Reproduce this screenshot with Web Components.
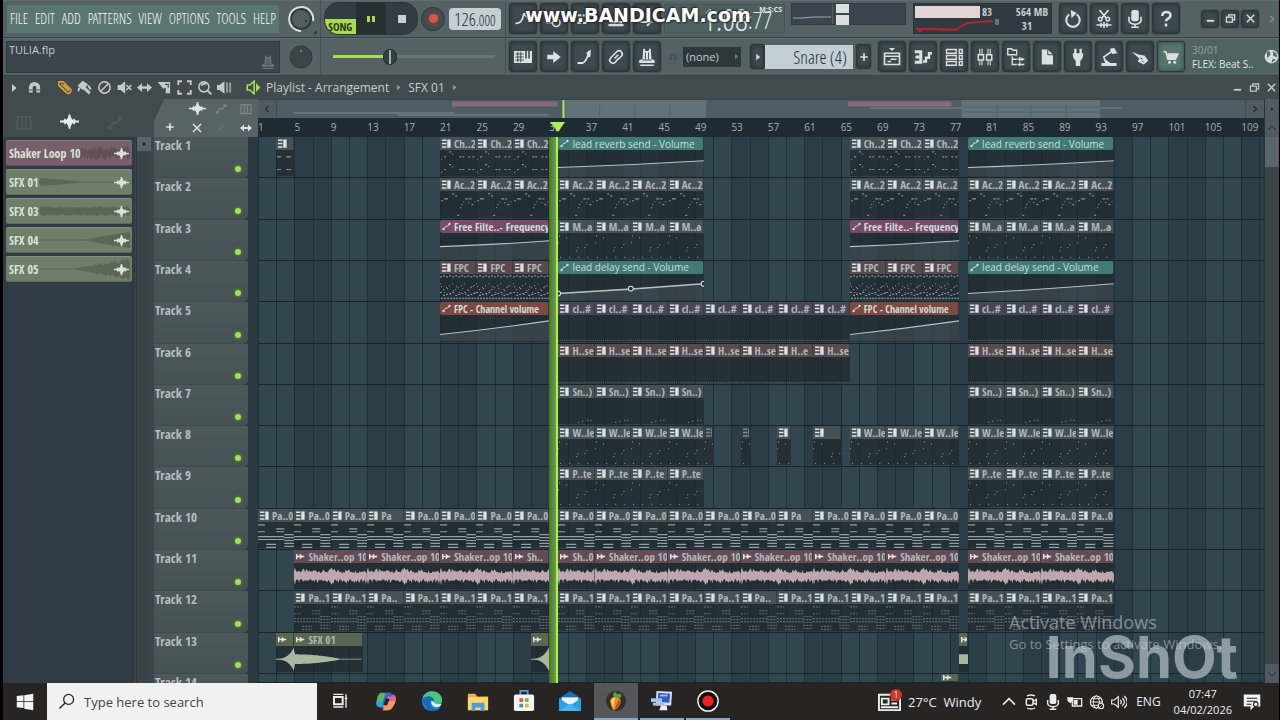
<!DOCTYPE html>
<html lang="en">
<head>
<meta charset="utf-8">
<title>TULIA.flp - Playlist</title>
<style>
  :root {
    --thin: "Open Sans Condensed Light", "Liberation Sans Narrow", sans-serif;
    --narrow: "Open Sans Condensed", "Liberation Sans Narrow", sans-serif;
    --ui: "Open Sans", "Noto Sans", sans-serif;
    --line: #384247;
    --accent: #a8dc4c;
  }
  body {
    margin: 0;
    background: #000;
    font-family: var(--ui);
    color: #dfe5e5;
  }
</style>
</head>
<body>
<daw-app></daw-app>

<script>
const ICONS = {
  play: '<path d="M8 4l9 8-9 8z" fill="currentColor"/>',
  magnet: '<path d="M3 20v-8a9 9 0 0 1 18 0v8h-6v-8a3 3 0 0 0-6 0v8z" fill="currentColor"/><path d="M3 16h6M15 16h6" stroke="#414b4f" stroke-width="1.5"/>',
  pencil: '<path d="M3 3h7l12 12c2 3-3 8-6 6L3 9z" fill="none" stroke="currentColor" stroke-width="2.5"/><path d="M7 6l12 12M5 9l10 10M11 7l9 9" stroke="currentColor" stroke-width="2"/>',
  brush: '<path d="M1 9L9 1l9 6-9 9zM12 10l10 9-3 4-10-9z" fill="currentColor"/><path d="M4 12l-2 6M18 9l4 6" stroke="currentColor" stroke-width="3"/>',
  ban: '<circle cx="12" cy="12" r="9" fill="none" stroke="currentColor" stroke-width="2.5"/><path d="M6 18L18 6" stroke="currentColor" stroke-width="2.5"/>',
  mute: '<path d="M1 8h5l7-6v20l-7-6H1z" fill="currentColor"/><path d="M15 8l8 8M23 8l-8 8" stroke="currentColor" stroke-width="2.5"/>',
  slip: '<path d="M0 12l8-7v14zM24 12l-8-7v14z" fill="currentColor"/><path d="M5 12h14" stroke="currentColor" stroke-width="4"/>',
  slice: '<path d="M1 3h20v18h-7V12L10 14z" fill="currentColor"/><path d="M13 7h5v5" fill="none" stroke="#414b4f" stroke-width="2"/>',
  marquee: '<path d="M2 8V2h6M16 2h6v6M22 16v6h-6M8 22H2v-6" fill="none" stroke="currentColor" stroke-width="3"/>',
  zoom: '<circle cx="11" cy="11" r="8" fill="none" stroke="currentColor" stroke-width="2.5"/><path d="M7 9l3-3h5M17 17l6 6" stroke="currentColor" stroke-width="3" fill="none"/>',
  preview: '<path d="M0 8h4l8-6v20l-8-6H0z" fill="currentColor"/><path d="M16 4v16M21 4v16" stroke="#9aa19f" stroke-width="3"/>',
  speaker: '<path d="M2 8h4l7-6v20l-7-6H2z" fill="none" stroke="currentColor" stroke-width="2.5"/><path d="M16 5l7 7-7 7z" fill="currentColor"/>',
  wave: '<path d="M0 12h24M12 3v18" stroke="currentColor" stroke-width="2.4"/><path d="M4 12l2-4 2 2 2-3 2-4 2 4 2 3 2-2 2 4-2 4-2-2-2 3-2 4-2-4-2-3-2 2z" fill="currentColor"/>',
  auto: '<circle cx="4" cy="19" r="3" fill="currentColor"/><circle cx="20" cy="5" r="3" fill="currentColor"/><path d="M4 19l6-8h5l5-6" fill="none" stroke="currentColor" stroke-width="2.5"/>',
  pattern: '<path d="M0 1h12v4H0zM0 10h12v4H0zM0 19h12v4H0zM14 1h9v22h-9z" fill="currentColor"/>',
  sample: '<path d="M2 5v14M2 12h10M14 12h8" stroke="currentColor" stroke-width="4"/><path d="M10 4l9 8-9 8z" fill="currentColor"/>',
  keys: '<path d="M2 3h20v18H2zM9 3v11M15 3v11M9 14v7M15 14v7" fill="none" stroke="currentColor" stroke-width="2.5"/>',
  plus: '<path d="M12 3v18M3 12h18" stroke="currentColor" stroke-width="4"/>',
  cross: '<path d="M4 4l16 16M20 4L4 20" stroke="currentColor" stroke-width="3"/>',
  slash: '<path d="M7 18L17 6" stroke="currentColor" stroke-width="2"/>',
  left: '<path d="M16 5l-8 7 8 7" fill="none" stroke="currentColor" stroke-width="3"/>',
  right: '<path d="M8 5l8 7-8 7" fill="none" stroke="currentColor" stroke-width="3"/>',
  up: '<path d="M3 16l9-9 9 9" fill="none" stroke="currentColor" stroke-width="2.4"/>',
  down: '<path d="M3 8l9 9 9-9" fill="none" stroke="currentColor" stroke-width="2.4"/>',
  dot: '<circle cx="12" cy="12" r="3" fill="currentColor"/>',
  min: '<path d="M4 17h16" stroke="currentColor" stroke-width="4"/>',
  restore: '<path d="M3 9h13v11H3zM8 9V4h13v11h-5" fill="none" stroke="currentColor" stroke-width="2.6"/>',
  pianoroll: '<path d="M0 4h24v16H0z" fill="currentColor"/><path d="M2 8h11M2 12h11M2 16h11M5 5v14M9 5v14" stroke="#39434a" stroke-width="1.2"/><path d="M16 4v10M20 4v10" stroke="#39434a" stroke-width="2"/>',
  arrow: '<path d="M3 9h8V4l10 8-10 8v-5H3z" fill="currentColor"/>',
  slide: '<path d="M2 20h7c5-2 4-6 7-9" fill="none" stroke="currentColor" stroke-width="2.4"/><path d="M15 12l-1-6 6-4-1 10z" fill="currentColor"/>',
  link: '<path d="M10 14l5-5M9 9l4-4a4 4 0 0 1 6 6l-4 4M15 14l-4 5a4 4 0 0 1-6-6l4-4" fill="none" stroke="currentColor" stroke-width="2.2"/>',
  metronome: '<path d="M7 1h2l1 3h4l1-3h2l1 14c6 1 5 4 3 5H3c-3-1-3-4 3-5z" fill="currentColor"/><path d="M10 6v9M14 6v9M6 16h12" stroke="#39434a" stroke-width="1.2"/><path d="M3 23h18" stroke="currentColor" stroke-width="2"/>',
  curve: '<path d="M2 18c8 0 9-5 11-13l8-2M13 5l-2 8M13 5l6 7" fill="none" stroke="currentColor" stroke-width="2"/>',
  step: '<path d="M2 17h8a5 5 0 1 0 10 0 5 5 0 0 0-10 0" fill="none" stroke="currentColor" stroke-width="2"/>',
  notes: '<path d="M2 7h5M9 7h5M16 7h5M2 17h5M9 17h5" stroke="currentColor" stroke-width="3"/>',
  bars: '<path d="M4 16h16M2 20h20" stroke="currentColor" stroke-width="3"/>',
  redo: '<path d="M3 16h14l-5-5M17 16l-5 5" fill="none" stroke="currentColor" stroke-width="2.5"/>',
  undo: '<path d="M7 6a9 9 0 1 0 10 0" fill="none" stroke="currentColor" stroke-width="2.8"/><path d="M9 0l8 4-7 7z" fill="currentColor"/>',
  cut: '<path d="M6 0l9 11M18 0L9 11M2 20h20M8 17v6M12 16v8M16 17v6" stroke="currentColor" stroke-width="2.2"/><circle cx="7" cy="12" r="2.4" fill="none" stroke="currentColor" stroke-width="2"/><circle cx="17" cy="12" r="2.4" fill="none" stroke="currentColor" stroke-width="2"/>',
  mic: '<rect x="7" y="0" width="10" height="15" rx="3" fill="currentColor"/><path d="M4 9v5a8 5 0 0 0 16 0V9M12 19v4M7 23h10" fill="none" stroke="currentColor" stroke-width="2.2"/>',
  help: '<path d="M7 8c0-7 11-7 11-1 0 5-6 4-6 8M12 18v4" fill="none" stroke="currentColor" stroke-width="3.4"/>',
  playlist: '<path d="M8 0h8l-4 4z" fill="currentColor"/><path d="M2 7h20v15H2zM2 11h20M6 18h5M10 15h8" fill="none" stroke="currentColor" stroke-width="2.2"/>',
  steps: '<path d="M1 3h10v18H1v-4h6v-3H2v-4h5V7H1z" fill="currentColor"/><path d="M12 18h4v-5h4V7h4" fill="none" stroke="currentColor" stroke-width="3.2"/>',
  rack: '<path d="M2 2h13v5H2zM2 10h13v5H2zM2 18h13v5H2zM19 2h4v5h-4zM19 10h4v5h-4zM19 18h4v5h-4z" fill="none" stroke="currentColor" stroke-width="1.8"/>',
  mixer: '<path d="M5 1v7M8 1v7M16 1v7M19 1v7M5 17v6M8 17v6M16 17v6M19 17v6" stroke="currentColor" stroke-width="1.4"/><path d="M3 9h7v7H3zM14 9h7v7h-7z" fill="none" stroke="currentColor" stroke-width="2"/>',
  browser: '<path d="M1 1h5l2 2h5v6H1zM7 11v11h6M7 15h6M14 15h9M14 22h9M17 12v6M20 13v4M17 19v5" fill="none" stroke="currentColor" stroke-width="1.8"/>',
  page: '<path d="M5 2h8l7 7v13H5z" fill="currentColor"/><path d="M13 2v7h7" fill="none" stroke="#39434a" stroke-width="1.3"/>',
  plug: '<path d="M5 7h2V1h3v6h4V1h3v6h2c0 5-1 8-4 10v7H9v-7C6 15 5 12 5 7z" fill="currentColor"/>',
  lamp: '<path d="M3 21h18v2H3zM8 20l-3-8L15 5" fill="none" stroke="currentColor" stroke-width="2.2"/><path d="M13 1l6-1 4 7-7 1zM7 15l8 6H7z" fill="currentColor"/>',
  hand: '<path d="M1 5l10 4 7 1 5 7-6 5-8-4 2-4z" fill="currentColor"/><path d="M12 13l4 2M14 17l3 2" stroke="#39434a"/>',
  cart: '<path d="M2 5h3l3 10h11M7 8h14l-2 5H8" fill="none" stroke="currentColor" stroke-width="2.2"/><path d="M8 10h12" stroke="currentColor" stroke-width="4"/><circle cx="10" cy="19" r="2" fill="currentColor"/><circle cx="17" cy="19" r="2" fill="currentColor"/>',
  globe: '<circle cx="12" cy="12" r="11" fill="#d4dddb"/><path d="M4 5c5-3 7 0 6 4s-5 3-4 8M14 3c5 2 8 6 7 10l-6-2zM12 22l2-7 5 2" fill="#54706b"/>',
  windows: '<path d="M1 4l9-1v8H1zM11 3l12-2v10H11zM1 12h9v8l-9-1zM11 12h12v11l-12-2z" fill="#f4f4f4"/>',
  search: '<circle cx="15" cy="9" r="7" fill="none" stroke="#222" stroke-width="1.8"/><path d="M10 14l-8 8" stroke="#222" stroke-width="2"/>',
  taskview: '<path d="M3 6h13v11H3z" fill="none" stroke="currentColor" stroke-width="3"/><path d="M2 2h15M2 21h15M21 2v20M19 8h4" stroke="currentColor" stroke-width="2"/>',
  copilot: '<path d="M7 3h9l-4 16H6c-4 0-6-3-4-8s3-8 5-8z" fill="#2f9fd8"/><path d="M2 12c0-4 2-9 5-9l4 1-3 9z" fill="#57b85c"/><path d="M13 5h6c4 0 5 5 3 9s-4 8-8 8H8z" fill="#e7629b"/><path d="M9 22l4-10h9c-1 5-4 10-8 10z" fill="#f59a54"/><path d="M12 3h5l3 4h-6l-3 8H8z" fill="#3f62cf"/><path d="M12 9l4 1-3 7-4-1z" fill="#272625"/>',
  edge: '<circle cx="12" cy="12" r="11" fill="#1d86d3"/><path d="M2 8C6-2 23 0 23 11c0 5-7 6-9 3 2-6-6-8-12-6z" fill="#4bc67b"/><path d="M2 11c2-5 11-6 12 0-3 0-6 4-2 8s8 1 9 0c-4 6-13 5-16-1-2-3-3-5-3-7z" fill="#156bb4"/><path d="M11 12c4-1 2 5 11 3 0 5-11 6-11-3z" fill="#dff1f7"/>',
  folder: '<path d="M1 4h8l2 3h12v15H1z" fill="#e9b242"/><path d="M1 8h22v14H1z" fill="#fbd56e"/><path d="M5 23v-9h14v9h-4v-4H9v4z" fill="#4b9edb"/>',
  store: '<path d="M8 6V1h8v5" fill="none" stroke="#43a7d9" stroke-width="2"/><rect x="1" y="5" width="22" height="18" rx="2" fill="#f4f4f4"/><path d="M7 9h4v4H7z" fill="#e3543a"/><path d="M13 9h4v4h-4z" fill="#78b43f"/><path d="M7 15h4v4H7z" fill="#3793dc"/><path d="M13 15h4v4h-4z" fill="#efb52f"/>',
  mail: '<path d="M0 9l12-8 12 8v14H0z" fill="#1470b8"/><path d="M3 8h18v8H3z" fill="#e9f5fb"/><path d="M0 9l12 8 12-8v14H0z" fill="#2ba0e4"/><path d="M0 23l12-8 12 8z" fill="#46b6f0"/>',
  fruit: '<circle cx="12" cy="12" r="11" fill="#33302a"/><path d="M6 12c0-5 9-6 11-1 1 5-5 11-7 11s-4-6-4-10z" fill="#f08a24"/><path d="M6 12c1-4 4-4 5-3l-2 10z" fill="#ffd15a"/><path d="M9 7c-1-5 4-6 4-2 5-3 7 3 2 4z" fill="#59a63c"/><path d="M15 11c4 2-2 9-5 11z" fill="#c73e24"/>',
  remote: '<path d="M6 1l17 1-1 15H5z" fill="#dcdfe8"/><path d="M8 3l13 1-1 10-13-1z" fill="#325cc4"/><path d="M0 9h12v4H0zM2 14h12v3H2z" fill="#a9bfee"/><path d="M11 17h6l1 5H9z" fill="#eee"/><path d="M10 6h8" stroke="#9bc3ff" stroke-width="2"/>',
  record: '<circle cx="12" cy="12" r="11" fill="#111" stroke="#eee" stroke-width="1.6"/><circle cx="12" cy="12" r="6" fill="#ec2227"/>',
  headlines: '<path d="M1 5h22v16H1zM4 9h7v6H4zM14 10h6M14 14h6M3 18h18" fill="none" stroke="currentColor" stroke-width="2"/>',
  meet: '<rect x="5" y="7" width="10" height="10" rx="2" fill="none" stroke="currentColor" stroke-width="2.2"/><path d="M15 11l5-3v8l-5-3M6 3c4-2 8-2 12 0M6 21c4 2 8 2 12 0" fill="none" stroke="currentColor" stroke-width="2"/>',
  battery: '<path d="M8 7h14v11H8z" fill="none" stroke="currentColor" stroke-width="2"/><path d="M0 5h9v6l-4 3-4-3zM10 9h6v7h-6z" fill="currentColor"/>',
  network: '<circle cx="11" cy="12" r="9" fill="none" stroke="currentColor" stroke-width="1.6"/><path d="M2 12h19M11 2c-6 6-6 14 0 20M11 2c6 6 6 14 0 20M3 7h16M3 17h16" fill="none" stroke="currentColor" stroke-width="1.4"/><circle cx="18" cy="18" r="4" fill="#242322" stroke="currentColor" stroke-width="1.6"/><path d="M15 21l6-6" stroke="currentColor"/>',
  volume: '<path d="M1 9h4l6-5v16l-6-5H1z" fill="none" stroke="currentColor" stroke-width="1.8"/><path d="M14 9c2 2 2 4 0 6M17 6c4 4 4 8 0 12M20 3c6 6 6 12 0 18" fill="none" stroke="currentColor" stroke-width="1.8"/>',
  notify: '<path d="M1 2h22v16h-8l-5 5v-5H1z" fill="#f2f2f2"/><path d="M5 7h14M5 11h14M5 15h6" stroke="#222" stroke-width="1.5"/><circle cx="17" cy="15" r="3" fill="#f2f2f2" stroke="#222" stroke-width="1.5"/>'
};

class DawIcon extends HTMLElement {
  connectedCallback() {
    this.attachShadow({ mode: 'open' }).innerHTML = `
      <style>
        :host { display: inline-block; width: var(--size, 18px); height: var(--size, 18px); flex: none; }
        svg { display: block; width: 100%; height: 100%; }
      </style>
      <svg viewBox="0 0 24 24" aria-hidden="true">${ICONS[this.getAttribute('name')] || ''}</svg>`;
  }
}
customElements.define('daw-icon', DawIcon);

// Square toolbar button with an inset look
class ToolButton extends HTMLElement {
  connectedCallback() {
    const icon = this.getAttribute('icon');
    this.attachShadow({ mode: 'open' }).innerHTML = `
      <style>
        :host { display: block; flex: none; width: 28px; height: 31px; }
        button {
          display: flex; align-items: center; justify-content: center;
          box-sizing: border-box; width: 100%; height: 100%; padding: 0;
          border: 1px solid #2c363c; border-radius: 3px;
          background: var(--face, #3f4a50); color: #dbe1e1;
          box-shadow: inset 0 0 5px rgba(0,0,0,.4), 0 0 0 1px #4b565b;
          font: inherit;
        }
      </style>
      <button aria-label="${this.getAttribute('label') || icon}"><daw-icon name="${icon}"></daw-icon></button>`;
  }
}
customElements.define('tool-button', ToolButton);

class DawToolbar extends HTMLElement {
  connectedCallback() {
    const buttons = (names) => names.map((n) => `<tool-button icon="${n}"></tool-button>`).join('');
    this.attachShadow({ mode: 'open' }).innerHTML = `
      <style>
        :host { display: block; background: #566166; }
        .row { display: flex; align-items: center; box-sizing: border-box; height: 38px; border-bottom: 1px solid var(--line); box-shadow: inset 0 1px #626d71; }
        nav, .hint { width: 274px; box-sizing: border-box; margin-left: 3px; flex: none; }
        nav {
          display: flex; justify-content: space-between; align-items: center; height: 30px; padding: 0 3px;
          background: #5a7573; border: 1px solid #4b6363;
        }
        nav a { color: #f4f8f6; text-decoration: none; font: 14px var(--thin); }
        .hint {
          display: flex; justify-content: space-between; height: 32px; padding: 0 4px 3px 2px;
          background: #3c444c; border: 1px solid #313a40; color: #c4cbcd; font-size: 11px;
        }
        .hint daw-icon { align-self: flex-end; color: #6c757b; --size: 14px; }
        .knob { display: flex; align-items: center; justify-content: center; box-sizing: border-box; width: 41px; height: 100%; padding-left: 3px; border-right: 1px solid #465156; flex: none; }
        .mid { display: flex; align-items: center; gap: 4px; box-sizing: border-box; width: 185px; height: 100%; padding: 0 4px; border-right: 1px solid #465156; flex: none; }
        .transport { display: flex; width: 92px; height: 31px; border-radius: 14px; overflow: hidden; background: #333d43; box-shadow: 0 0 0 1px #2b353a; }
        .transport button { flex: 1; display: flex; align-items: center; justify-content: center; border: 0; padding: 0; background: none; }
        .transport .mode { flex-direction: column; font: 11px var(--narrow); }
        .mode span { flex: 1; width: 100%; line-height: 15px; color: #4e585d; }
        .mode .on { background: var(--accent); color: #26331a; }
        .transport .pause { background: #262f34; gap: 2px; }
        .pause i { width: 3px; height: 6px; background: var(--accent); }
        .stop i { width: 8px; height: 8px; background: #c9d0d2; }
        .rec { width: 24px; height: 24px; border: 1px solid #2b353a; border-radius: 50%; background: #424c51; padding: 0; display: flex; align-items: center; justify-content: center; }
        .rec i { width: 9px; height: 9px; border-radius: 50%; background: #dd5443; box-shadow: 0 0 4px #a04a40; }
        .tempo { display: flex; align-items: baseline; justify-content: center; box-sizing: border-box; width: 52px; height: 22px; border-radius: 4px; background: #c5cfd4; color: #1f2930; font: 18px/22px var(--thin); }
        .tempo small { font-size: 14px; }
        .group { display: flex; gap: 3px; margin-left: 3px; flex: none; }
        .time { display: flex; align-items: flex-end; justify-content: flex-end; box-sizing: border-box; width: 121px; height: 29px; margin-left: 3px; padding: 0 12px 0 0; background: #4c6160; border: 1px solid #435556; color: #dfe9e6; font: 32px/26px var(--thin); position: relative; flex: none; }
        .time b { font: 24px/25px var(--thin); }
        .time small { position: absolute; top: 0; right: 2px; font: bold 7px/9px var(--ui); }
        .scope { display: flex; gap: 3px; box-sizing: border-box; width: 115px; height: 22px; margin: 0 0 10px 6px; background: #3c444d; border: 1px solid #343d44; flex: none; }
        .scope svg { width: 40px; height: 20px; border-right: 1px solid #525c62; }
        .meter { display: grid; gap: 2px; width: 13px; height: 21px; }
        .meter i { background: #d9e0e1; }
        .cpu { display: grid; grid-template-columns: 65px 1fr auto; grid-template-rows: 14px 15px; column-gap: 2px; box-sizing: border-box; width: 139px; height: 31px; margin-left: 7px; padding: 1px 3px 1px 1px; background: #303a40; border: 1px solid #2a3338; color: #c6cfd1; font: 11px/14px var(--narrow); flex: none; }
        .cpu .load { background: #e3d5d1; margin: 1px 0; }
        .cpu svg { grid-column: 1 / 3; width: 84px; height: 14px; }
        .cpu .voices { text-align: right; padding-right: 16px; }
        .tools { margin-left: 7px; }
        .win { display: flex; gap: 2px; margin: 0 8px 0 auto; }
        .win tool-button { width: 18px; height: 18px; --size: 11px; }
        .edge { color: #8a9497; --size: 10px; margin-right: 2px; }
        input[type=range] { appearance: none; width: 162px; height: 20px; margin: 0 0 0 8px; background: linear-gradient(90deg, var(--accent) 36%, #6a757a 36%) center / 100% 3px no-repeat; }
        input[type=range]::-webkit-slider-thumb { appearance: none; width: 14px; height: 16px; border-radius: 7px; border: 1px solid #222b30; background: linear-gradient(90deg, #333d42 43%, #a5b0b2 43% 57%, #333d42 57%); }
        .magnet { margin: 0 5px 0 7px; color: #485358; --size: 10px; }
        select { appearance: none; border: 0; border-radius: 0; outline: 0; margin: 0; }
        .snapbox { display: flex; align-items: center; width: 58px; height: 20px; background: #2e373c; color: #6a757a; --size: 9px; flex: none; }
        .snap { flex: 1; min-width: 0; padding: 0 0 0 3px; background: none; color: #c2cbcb; font: 11px var(--ui); }
        .thin { width: 15px; height: 25px; --size: 10px; margin-left: 9px; }
        .thin.add { margin-left: 3px; }
        .pattern { width: 88px; height: 24px; padding: 0 6px 0 0; background: #c3ced5; color: #222e38; font: 18px var(--thin); text-align: right; text-align-last: right; }
        .panels { margin-left: 7px; }
        .cartbtn { --face: #56766f; }
        .newsbox { display: flex; align-items: center; justify-content: space-between; flex: 1; min-width: 0; height: 34px; margin-left: 4px; padding: 0 0 0 3px; background: #4f6460; font-size: 10px; line-height: 14px; white-space: nowrap; }
        .newsbox span { color: #94a3a0; display: block; }
        .newsbox daw-icon { --size: 15px; }
      </style>
      <div class="row">
        <nav>${['FILE', 'EDIT', 'ADD', 'PATTERNS', 'VIEW', 'OPTIONS', 'TOOLS', 'HELP'].map((m) => `<a href="#">${m}</a>`).join('')}</nav>
        <div class="knob">
          <svg width="30" height="30" viewBox="0 0 30 30"><circle cx="14" cy="15" r="10" fill="#525d62" stroke="#2f393d" stroke-width="2"/><path d="M14 27a12 12 0 1 1 12-10" fill="none" stroke="#d8dedf" stroke-width="2"/><circle cx="19" cy="17" r="1" fill="#222"/><path d="M30 26v4h-4z" fill="#2f393d"/></svg>
        </div>
        <div class="mid">
          <div class="transport">
            <button class="mode" aria-label="Pattern or song mode"><span></span><span class="on">SONG</span></button>
            <button class="pause" aria-label="Pause"><i></i><i></i></button>
            <button class="stop" aria-label="Stop"><i></i></button>
          </div>
          <button class="rec" aria-label="Record"><i></i></button>
          <div class="tempo">126<small>.000</small></div>
        </div>
        <div class="group">${buttons(['curve', 'step', 'notes', 'bars', 'redo'])}</div>
        <div class="time"><small>M:S:CS</small>1:08<b>:77</b></div>
        <div class="scope">
          <svg viewBox="0 0 40 20"><path d="M1 14h10l10-1h18" fill="none" stroke="#9ca7ac"/></svg>
          <div class="meter"><i></i><i></i></div>
        </div>
        <div class="cpu">
          <div class="load"></div><div>83</div><div>564 MB</div>
          <svg viewBox="0 0 84 14"><path d="M1 10h15l24 1 12-7 26-2" fill="none" stroke="#b4242b" stroke-width="2"/><path d="M1 9h8l-4 5z" fill="#b4242b"/><path d="M80 0h4v6h-4z" fill="#6d7278"/></svg>
          <div class="voices">31</div>
        </div>
        <div class="group tools">${buttons(['undo', 'cut', 'mic', 'help'])}</div>
        <div class="win">${buttons(['min', 'restore', 'cross'])}</div>
        <daw-icon class="edge" name="right"></daw-icon>
      </div>
      <div class="row">
        <div class="hint"><span>TULIA.flp</span><daw-icon name="metronome"></daw-icon></div>
        <div class="knob">
          <svg width="30" height="32" viewBox="0 0 30 32"><circle cx="14" cy="16" r="13" fill="none" stroke="#6a757a" stroke-dasharray="1 4"/><circle cx="14" cy="16" r="11" fill="#3a4449" stroke="#2f393d"/><circle cx="14" cy="10" r="1" fill="#8c979a"/></svg>
        </div>
        <div class="mid"><input type="range" min="0" max="100" value="34" aria-label="Master pitch"></div>
        <div class="group">${buttons(['pianoroll', 'arrow', 'slide', 'link', 'metronome'])}</div>
        <daw-icon class="magnet" name="magnet"></daw-icon>
        <div class="snapbox"><select class="snap" aria-label="Snap"><option>(none)</option></select><daw-icon name="play"></daw-icon></div>
        <tool-button class="thin" icon="play"></tool-button>
        <select class="pattern" aria-label="Pattern"><option>Snare (4)</option></select>
        <tool-button class="thin add" icon="plus"></tool-button>
        <div class="group panels">${buttons(['playlist', 'steps', 'rack', 'mixer', 'browser', 'page', 'plug', 'lamp', 'hand'])}<tool-button class="cartbtn" icon="cart"></tool-button></div>
        <div class="newsbox"><div><span>30/01</span>FLEX: Beat S..</div><daw-icon name="globe"></daw-icon></div>
      </div>`;
  }
}
customElements.define('daw-toolbar', DawToolbar);

class PlaylistTitle extends HTMLElement {
  connectedCallback() {
    const tools = ['pencil', 'brush', 'ban', 'mute', 'slip', 'slice', 'marquee', 'zoom', 'preview'];
    this.attachShadow({ mode: 'open' }).innerHTML = `
      <style>
        :host { display: flex; align-items: center; height: 23px; background: #414b4f; padding: 0 2px 0 5px; --size: 15px; }
        button { display: flex; border: 0; padding: 0; margin: 0; background: none; color: #c3cac9; }
        .menu { --size: 12px; margin-right: 7px; }
        .tools { display: flex; gap: 5px; margin: 0 14px 0 15px; }
        .tools button:first-child { color: #dd9c3a; }
        .src { color: var(--accent); }
        h1 { margin: 0 0 0 5px; font: 12px var(--ui); color: #c6cdcc; white-space: nowrap; display: flex; align-items: center; gap: 5px; }
        h1 daw-icon { --size: 9px; color: #8d9795; }
        .win { display: flex; gap: 6px; margin-left: auto; --size: 11px; }
      </style>
      <button class="menu" aria-label="Playlist menu"><daw-icon name="play"></daw-icon></button>
      <button aria-label="Snap to grid"><daw-icon name="magnet"></daw-icon></button>
      <div class="tools">${tools.map((t) => `<button aria-label="${t}"><daw-icon name="${t}"></daw-icon></button>`).join('')}</div>
      <daw-icon class="src" name="speaker"></daw-icon>
      <h1>Playlist - Arrangement <daw-icon name="play"></daw-icon> SFX 01 <daw-icon name="play"></daw-icon></h1>
      <div class="win">
        <button aria-label="Minimize"><daw-icon name="min"></daw-icon></button>
        <button aria-label="Restore"><daw-icon name="restore"></daw-icon></button>
        <button aria-label="Close"><daw-icon name="cross"></daw-icon></button>
      </div>`;
  }
}
customElements.define('playlist-title', PlaylistTitle);

// Repeatable noise so that waveforms never change between loads
function noise(i) {
  const v = Math.sin(i * 12.9898) * 43758.5453;
  return v - Math.floor(v);
}

function waveform(width, mid, amp) {
  const top = [];
  const bottom = [];
  for (let x = 0; x <= width; x++) {
    top.push(`${x} ${(mid - amp(x, noise(x + 1))).toFixed(1)}`);
    bottom.unshift(`${x} ${(mid + amp(x, noise(x + 57))).toFixed(1)}`);
  }
  return `M${top.join('L')}L${bottom.join('L')}z`;
}

class PickerItem extends HTMLElement {
  connectedCallback() {
    const shapes = {
      loop: (x, n) => (x < 72 ? 0 : 2 + n * 5),
      fade: (x) => (x < 34 ? 0 : Math.max(0.5, 4 - (x - 34) / 12)),
      flat: (x, n) => (x < 34 ? 0 : 3 + n * 2),
      rise: (x) => (x < 34 ? 0 : Math.max(0.5, (x - 75) / 6)),
      swell: (x, n) => (x < 34 ? 0 : Math.max(0.5, (x - 65) / 8 + n * (x - 65) / 12))
    };
    this.attachShadow({ mode: 'open' }).innerHTML = `
      <style>
        :host { display: flex; align-items: center; box-sizing: border-box; height: 26px; padding: 0 3px; border-radius: 2px;
          background-color: var(--tone, #707d68); box-shadow: inset 0 1px rgba(255,255,255,.15), inset 0 -1px rgba(0,0,0,.15); color: #dde2d9; font: 12px var(--narrow); position: relative; --size: 15px; }
        svg { position: absolute; inset: 0; width: 100%; height: 100%; }
        span { flex: 1; position: relative; }
        daw-icon { position: relative; }
      </style>
      <svg viewBox="0 0 125 26" preserveAspectRatio="none"><path d="${waveform(123, 13, shapes[this.getAttribute('shape')])}" fill="rgba(40,44,36,.28)"/></svg>
      <span><slot></slot></span><daw-icon name="wave"></daw-icon>`;
  }
}
customElements.define('picker-item', PickerItem);

class ClipPicker extends HTMLElement {
  connectedCallback() {
    this.attachShadow({ mode: 'open' }).innerHTML = `
      <style>
        :host { display: flex; flex-direction: column; width: 151px; flex: none; background: #3b464c; }
        .tabs { display: flex; align-items: flex-end; justify-content: space-between; box-sizing: border-box; height: 38px; padding: 0 31px 6px 13px; background: #414b4f; color: #505b5f; --size: 16px; }
        .tabs .on { color: #e6ebea; --size: 19px; }
        .body { flex: 1; display: flex; min-height: 0; }
        .list { flex: 1; display: flex; flex-direction: column; gap: 3px; padding: 3px 3px 0 3px; background: #303c45; }
        .bar { width: 14px; margin: 0 3px 0 1px; background: #3a4448; border-left: 1px solid #2c363b; }
        .bar button { display: flex; width: 14px; height: 14px; padding: 0; border: 0; background: #59646a; color: #222b30; --size: 14px; }
      </style>
      <div class="tabs"><daw-icon name="keys"></daw-icon><daw-icon class="on" name="wave"></daw-icon><daw-icon name="auto"></daw-icon></div>
      <div class="body">
        <div class="list"><slot></slot></div>
        <div class="bar"><button aria-label="Scroll up"><daw-icon name="dot"></daw-icon></button></div>
      </div>`;
  }
}
customElements.define('clip-picker', ClipPicker);

// Note layouts of a four-bar pattern: [x, y, width] on a 36 x 27 field
const MELODY = [[1, 3, 1], [8, 5, 1], [0, 10, 1], [18, 18, 1], [19, 15, 1], [26, 15, 1], [28, 12, 1], [2, 25, 1], [11, 25, 1], [20, 25, 1], [29, 25, 1]];
const CHORDS = [[0, 3, 7], [0, 10, 7], [18, 7, 8], [18, 10, 8], [0, 15, 26], [0, 18, 26], [26, 13, 10], [26, 16, 10], [26, 19, 10], [8, 23, 10], [26, 22, 10], [8, 26, 10], [26, 25, 10]];
const HALF = [[1, 10, 1], [4, 7, 2], [9, 2, 2], [12, 4, 1], [19, 7, 2], [22, 7, 2], [28, 7, 2], [32, 7, 2]];
const DRUMS = [];
for (let x = 0; x < 36; x += 3) {
  DRUMS.push([x, 3 - (x % 2), 2], [x, 10 + (x % 4) * 2, 1], [x + 1, 13 + (x % 5) * 2, 1], [x, 19 + (x % 4), 2], [x + 1, 25, 2]);
}
const TICKS = [];
for (let x = 0; x < 36; x += 2) TICKS.push([x, 26, 1]);

const NOTES = {
  ch: HALF.concat(HALF.map(([x, y, w]) => [x, y + 13, w])),
  ac: [[1, 10, 2], [4, 8, 4], [12, 3, 2], [15, 5, 2], [20, 17, 1], [21, 14, 1], [23, 11, 1], [25, 8, 3], [29, 8, 2], [28, 12, 1], [31, 14, 2], [34, 11, 1], [17, 25, 2]],
  stabs: [[1, 7, 4], [10, 7, 5], [1, 20, 4], [10, 20, 5]],
  melody: MELODY,
  fpc: DRUMS,
  ticks: TICKS,
  snare: [[20, 25, 1], [24, 24, 1], [29, 23, 1], [32, 23, 1]],
  chords: CHORDS,
  dashes: CHORDS
};
const FAINT = { ticks: 0.3, dashes: 0.4, chords: 0.75 };

class PlaylistClip extends HTMLElement {
  connectedCallback() {
    const { kind, label, bars, tone, dim, face } = this.clip;
    const width = bars * 9;
    this.style.gridColumn = `${(this.clip.start - 1) * 2 + 1} / span ${bars * 2}`;
    const icon = { pattern: 'pattern', auto: 'auto', audio: 'sample' }[kind];
    this.attachShadow({ mode: 'open' }).innerHTML = `
      <style>
        :host { display: flex; flex-direction: column; min-width: 0; overflow: hidden; margin: 0 0 1px; background: rgba(32,40,46,.72); }
        header { display: flex; align-items: center; gap: 3px; height: 13px; padding-left: 2px; background: ${tone || '#465156'}; border-right: 1px solid #333e44;
          border-radius: ${kind === 'auto' ? '2px' : '0'}; color: ${kind === 'auto' ? '#d0dcd8' : '#afb8ba'}; font: ${face || '11px var(--narrow)'}; white-space: nowrap; overflow: hidden; --size: 9px; opacity: ${dim ? 0.5 : 1}; }
        header daw-icon { color: ${kind === 'pattern' ? '#dbe3e5' : '#e6dfe0'}; }
        svg { flex: 1; min-height: 0; width: 100%; display: block; }
      </style>
      <header><daw-icon name="${icon}"></daw-icon><span>${label}</span></header>
      <svg viewBox="0 0 ${width} 27" preserveAspectRatio="none">${this.body(width)}</svg>`;
  }

  body(width) {
    const { kind, notes, from, to, handles, wave } = this.clip;
    if (kind === 'auto') {
      const dots = handles ? [0, 0.5, 1].map((t) => `<circle cx="${width * t}" cy="${from + (to - from) * t}" r="2.5" fill="#25333a" stroke="#dbe9e6"/>`).join('') : '';
      return `<path d="M0 ${from}Q${width / 2} ${(from + to) / 2 + 1} ${width} ${to}V27H0z" fill="rgba(140,165,170,.18)"/>
        <path d="M0 ${from}Q${width / 2} ${(from + to) / 2 + 1} ${width} ${to}" fill="none" stroke="#b4c4c4" stroke-width="${handles ? 1.6 : 1.1}"/>${dots}`;
    }
    if (kind === 'audio') {
      const amps = {
        shaker: (x, n) => (x % 36 === 1 ? 9 : 3 + n * (3 + 2 * Math.abs(Math.sin(x / 5)))),
        attack: (x) => 0.5 + Math.pow(x / 18, 3) * 12,
        decay: (x) => (x < 1 ? 10 : x < 45 ? 5 - Math.pow(x / 45, 2) * 4.4 : 0.4),
        block: () => 5
      };
      return `<path d="${waveform(width, 13.5, amps[wave])}" fill="${wave === 'shaker' ? '#bfa7b0' : '#a9b7a1'}"/>`;
    }
    const cut = NOTES[notes].filter(([x]) => x < width);
    const dash = notes === 'dashes' ? 'stroke-dasharray="2 1"' : '';
    return `<path d="${cut.map(([x, y, w]) => `M${x} ${y}h${w}`).join('')}" stroke="#b9c5c8" stroke-width="1.2" ${dash} opacity="${FAINT[notes] || 0.65}"/>`;
  }
}
customElements.define('playlist-clip', PlaylistClip);

const PURPLE = '#774c69';
const TEAL = '#417b75';
const RED = '#7d4a43';
const BROWN = '#584a4d';
const LILAC = '#48475a';
const SHAKER = '#654b56';
const OLIVE = '#596750';
const SMALL = '10px var(--narrow)';
const WIDE = '10px var(--ui)';

// count pattern clips in a row, each four bars long; labels can be replaced by index
const run = (start, count, label, notes, tone, replace = {}) =>
  Array.from({ length: count }, (_, i) => ({ kind: 'pattern', start: start + i * 4, bars: 4, label: replace[i] ?? label, notes, tone }));
const auto = (start, bars, label, tone, face, from, to, handles) => ({ kind: 'auto', start, bars, label, tone, face, from, to, handles });
const audio = (start, bars, label, tone, wave) => ({ kind: 'audio', start, bars, label, tone, wave });
const bit = (start, bars, notes, dim) => ({ kind: 'pattern', start, bars, label: '', notes, dim });

const reverb = (start) => auto(start, 16, 'lead reverb send - Volume', TEAL, WIDE, 18, 11);
const delay = (start, handles) => auto(start, 16, 'lead delay send - Volume', TEAL, WIDE, 20, 10, handles);
const filter = (start) => auto(start, 12, 'Free Filte..- Frequency', PURPLE, '', 14, 8);
const volume = (start) => auto(start, 12, 'FPC - Channel volume', RED, SMALL, 20, 6);

const TRACKS = [
  [bit(3, 2, 'stabs'), ...run(21, 3, 'Ch..2', 'ch'), reverb(34), ...run(66, 3, 'Ch..2', 'ch'), reverb(79)],
  [...run(21, 3, 'Ac..2', 'ac'), ...run(34, 4, 'Ac..2', 'ac'), ...run(66, 3, 'Ac..2', 'ac'), ...run(79, 4, 'Ac..2', 'ac')],
  [filter(21), ...run(34, 4, 'M..a', 'melody'), filter(66), ...run(79, 4, 'M..a', 'melody')],
  [...run(21, 3, 'FPC', 'fpc', BROWN), delay(34, true), ...run(66, 3, 'FPC', 'fpc', BROWN), delay(79)],
  [volume(21), ...run(34, 8, 'cl..#', 'ticks', LILAC), volume(66), ...run(79, 4, 'cl..#', 'ticks', LILAC)],
  [...run(34, 8, 'H..se', 'ticks', BROWN, { 6: 'H..e' }), ...run(79, 4, 'H..se', 'ticks', BROWN)],
  [...run(34, 4, 'Sn..)', 'snare'), ...run(79, 4, 'Sn..)', 'snare')],
  [...run(34, 4, 'W..le', 'melody'), bit(50, 1, 'melody', true), bit(54, 1, 'melody', true), bit(58, 1.5, 'melody'), bit(62, 3, 'melody'), ...run(66, 3, 'W..le', 'melody'), ...run(79, 4, 'W..le', 'melody')],
  [...run(34, 4, 'P..te', 'melody'), ...run(79, 4, 'P..te', 'melody')],
  [...run(1, 8, 'Pa..0', 'chords', '', { 3: 'Pa' }), ...run(34, 11, 'Pa..0', 'chords', '', { 6: 'Pa' }), ...run(79, 4, 'Pa..0', 'chords')],
  [...[5, 13, 21].map((s) => audio(s, 8, 'Shaker..op 10', SHAKER, 'shaker')), audio(29, 4, 'Sh..', SHAKER, 'shaker'), audio(34, 4, 'Sh..0', SHAKER, 'shaker'),
    ...[38, 46, 54, 62, 70, 79, 87].map((s) => audio(s, 8, 'Shaker..op 10', SHAKER, 'shaker'))],
  [...run(5, 7, 'Pa..1', 'dashes', '', { 2: 'Pa..' }), ...run(34, 11, 'Pa..1', 'dashes', '', { 5: 'Pa..' }), ...run(79, 4, 'Pa..1', 'dashes')],
  [audio(3, 2, '', OLIVE, 'attack'), audio(5, 7.5, 'SFX 01', OLIVE, 'decay'), audio(31, 2, '', OLIVE, 'attack'), audio(78, 1, '', OLIVE, 'block')],
  [audio(76, 2, '', OLIVE, 'block')]
];

class TrackHeader extends HTMLElement {
  connectedCallback() {
    this.attachShadow({ mode: 'open' }).innerHTML = `
      <style>
        :host { display: flex; justify-content: space-between; box-sizing: border-box; overflow: hidden; min-height: 38px; padding: 0 5px 3px 1px;
          background: linear-gradient(#4d585d, #465156); border-bottom: 1px solid #404b50; border-radius: 0 0 5px 0; color: #b5bfc0; font: 13px/16px var(--narrow); }
        button { align-self: flex-end; flex: none; width: 10px; height: 10px; padding: 0; border-radius: 50%; border: 2px solid #44702f; background: #a9dc66; }
      </style>
      <span><slot></slot></span><button aria-label="Mute track"></button>`;
  }
}
customElements.define('track-header', TrackHeader);

class PlaylistView extends HTMLElement {
  connectedCallback() {
    const labels = [];
    for (let bar = 1; bar <= 109; bar += 4) labels.push(`<span style="grid-column: ${(bar - 1) * 2 + 1} / span 4">${bar}</span>`);
    this.attachShadow({ mode: 'open' }).innerHTML = `
      <style>
        :host { flex: 1; min-width: 0; display: grid; grid-template-columns: 104px minmax(0, 1fr) 15px; grid-template-rows: 19px 19px minmax(0, 1fr); background: #2b3840; }
        .corner { grid-row: 1 / 3; display: grid; grid-template-columns: 31px repeat(3, 1fr); grid-template-rows: 1fr 1fr; place-items: center; background: linear-gradient(115deg, #414b4f 8%, #586368 9%); color: #dde3e3; --size: 12px; }
        .corner > :first-child { grid-row: 1 / 3; align-self: end; margin: 0 0 5px; --size: 10px; }
        .corner .off { color: #7b8589; }
        .corner .big { --size: 17px; }
        .overview { display: flex; gap: 1px; background: #414b4f; border-top: 1px solid #39444a; }
        .overview button, .side button { display: flex; align-items: center; justify-content: center; width: 18px; padding: 0; border: 0; background: #4f5b60; color: #242d31; --size: 10px; }
        .overview svg { flex: 1; min-width: 0; height: 18px; }
        .ruler, .lane, .over { display: grid; grid-template-columns: repeat(221, minmax(0, 1fr)); }
        .ruler { grid-column: 2; background: #1e2b32; color: #a3afb2; font: 10px/19px var(--ui); position: relative; }
        .ruler span { white-space: nowrap; }
        .heads, .lanes { display: grid; grid-template-rows: repeat(13, minmax(0, 1fr)) 9px; min-height: 0; }
        .heads { border-right: 10px solid #2b3a42; overflow: hidden; }
        .lanes { position: relative; overflow: hidden;
          background: repeating-linear-gradient(90deg, #1f2f38 0 1px, transparent 1px calc(200% / 110.5)), repeating-linear-gradient(90deg, #32464f 0 calc(400% / 110.5), #2b3e47 calc(400% / 110.5) calc(800% / 110.5)); }
        .lane { border-bottom: 1px solid #17242b; min-height: 0; grid-template-rows: minmax(0, 1fr); }
        .lane playlist-clip { grid-row: 1; }
        .over { position: absolute; inset: 0; pointer-events: none; }
        .over i { grid-column: 65 / span 2; background: linear-gradient(90deg, rgba(82,130,50,.75), #67a23a 75%, #aef052 76%); }
        .ruler svg { position: absolute; left: 29%; bottom: 4px; width: 15px; height: 11px; }
        .side { grid-column: 3; grid-row: 1 / 4; display: flex; flex-direction: column; background: #3b4549; border-left: 1px solid #28343a; }
        .side button { width: 100%; height: 19px; flex: none; }
        .side .thumb { height: 30px; background: #59656a; }
        .side .fill { flex: 1; }
      </style>
      <div class="corner">
        <daw-icon name="plus"></daw-icon>
        <daw-icon class="big" name="wave"></daw-icon><daw-icon class="off" name="auto"></daw-icon><daw-icon class="off" name="keys"></daw-icon>
        <daw-icon name="cross"></daw-icon><daw-icon class="off" name="slash"></daw-icon><daw-icon name="slip"></daw-icon>
      </div>
      <div class="overview">
        <button aria-label="Scroll left"><daw-icon name="left"></daw-icon></button>
        <svg viewBox="0 0 963 18" preserveAspectRatio="none">
          <path d="M0 0h963v18H0z" fill="#4d5d63"/><path d="M16 13h160M120 15h150M590 8h250" stroke="#64747a" stroke-width="2"/>
          <path d="M287 0h140v18H287zM681 0h138v18H681z" fill="#61727a"/><path d="M174 4h105M568 4h103" stroke="#866a78" stroke-width="5"/>
          <path d="M321 5v12M356 5v12M391 5v12M716 5v12M750 5v12M785 5v12M681 7h138M681 12h138" stroke="#53646b"/>
          <path d="M285 0v18" stroke="#aef052" stroke-width="2"/>
        </svg>
        <button aria-label="Scroll right"><daw-icon name="right"></daw-icon></button>
      </div>
      <div class="ruler">${labels.join('')}<svg viewBox="0 0 15 11"><path d="M0 0h15L8 10z" fill="#aef052"/></svg></div>
      <div class="heads">${TRACKS.map((_, i) => `<track-header>Track ${i + 1}</track-header>`).join('')}</div>
      <div class="lanes">${TRACKS.map(() => '<div class="lane"></div>').join('')}<div class="over"><i></i></div></div>
      <div class="side"><button aria-label="Zoom"><daw-icon name="dot"></daw-icon></button><button aria-label="Scroll up"><daw-icon name="up"></daw-icon></button>
        <div class="thumb"></div><div class="fill"></div><button aria-label="Scroll down"><daw-icon name="down"></daw-icon></button></div>`;

    this.shadowRoot.querySelectorAll('.lane').forEach((lane, i) => {
      TRACKS[i].forEach((clip) => {
        const el = document.createElement('playlist-clip');
        el.clip = clip;
        lane.appendChild(el);
      });
    });
  }
}
customElements.define('playlist-view', PlaylistView);

class TaskBar extends HTMLElement {
  connectedCallback() {
    const apps = ['taskview', 'copilot', 'edge', 'folder', 'store', 'mail', 'fruit', 'remote', 'record'];
    const state = { fruit: 'active', remote: 'open', record: 'open' };
    this.attachShadow({ mode: 'open' }).innerHTML = `
      <style>
        :host { display: flex; align-items: stretch; height: 37px; background: #262524; color: #ececec; font-size: 13px; }
        button { display: flex; align-items: center; justify-content: center; border: 0; padding: 0; background: none; color: inherit; font: inherit; }
        .start { width: 44px; --size: 18px; }
        .search { display: flex; align-items: center; width: 270px; background: #f1f1f1; --size: 17px; }
        .search daw-icon { margin: 0 9px 0 11px; }
        input { flex: 1; min-width: 0; border: 0; outline: 0; background: none; padding: 0; color: #444; font: 13px var(--ui); }
        input::placeholder { color: #444; opacity: 1; }
        .apps { display: flex; --size: 22px; }
        .apps button { width: 44px; margin: 0 1px; box-sizing: border-box; border-bottom: 2px solid transparent; }
        .apps button:first-child { --size: 16px; }
        .apps .active { background: #555657; border-color: #86a9c8; }
        .apps .open { border-color: #86a9c8; }
        .tray { display: flex; align-items: center; margin-left: auto; gap: 6px; --size: 16px; }
        .weather { position: relative; gap: 7px; font-size: 13px; margin-right: 14px; white-space: nowrap; --size: 23px; }
        .weather b { position: absolute; left: 12px; top: -1px; width: 12px; height: 12px; border-radius: 50%; background: #cf3427; font: 9px/12px var(--ui); }
        .lang { font-size: 12px; margin: 0 7px 0 3px; }
        .clock { text-align: center; font-size: 11px; line-height: 16px; margin-right: 5px; }
        .bell { margin-right: 18px; --size: 18px; }
      </style>
      <button class="start" aria-label="Start"><daw-icon name="windows"></daw-icon></button>
      <label class="search"><daw-icon name="search"></daw-icon><input type="text" placeholder="Type here to search" aria-label="Type here to search"></label>
      <div class="apps">${apps.map((a) => `<button class="${state[a] || ''}" aria-label="${a}"><daw-icon name="${a}"></daw-icon></button>`).join('')}</div>
      <div class="tray">
        <button class="weather"><daw-icon name="headlines"></daw-icon><b>1</b><span>27°C &nbsp;Windy</span></button>
        ${['up', 'meet', 'mic', 'battery', 'network', 'volume'].map((n) => `<daw-icon name="${n}"></daw-icon>`).join('')}
        <span class="lang">ENG</span>
        <div class="clock">07:47<br>04/02/2026</div>
        <daw-icon class="bell" name="notify"></daw-icon>
      </div>`;
  }
}
customElements.define('task-bar', TaskBar);

// Overlaid marks of the recorder, the system and the video editor
class ScreenMarks extends HTMLElement {
  connectedCallback() {
    this.attachShadow({ mode: 'open' }).innerHTML = `
      <style>
        :host { position: absolute; inset: 0; pointer-events: none; overflow: hidden; }
        p { position: absolute; margin: 0; white-space: nowrap; }
        .rec { top: 4px; left: 0; right: 4px; text-align: center; font: bold 19px/22px "DejaVu Sans", sans-serif; color: #fff; text-shadow: 1px 1px 2px #222, -1px -1px 2px #222; }
        .os { right: 50px; bottom: 66px; width: 221px; color: rgba(215,223,226,.5); font: 13px/20px var(--ui); }
        .os strong { display: block; font: 18px/24px var(--ui); }
        .editor { right: 42px; bottom: 34px; color: rgba(158,170,178,.85); font: bold 58px/58px Inter, sans-serif; }
      </style>
      <p class="rec">www.BANDICAM.com</p>
      <p class="editor">InShOt</p>
      <p class="os"><strong>Activate Windows</strong>Go to Settings to activate Windows.</p>`;
  }
}
customElements.define('screen-marks', ScreenMarks);

class DawApp extends HTMLElement {
  connectedCallback() {
    this.attachShadow({ mode: 'open' }).innerHTML = `
      <style>
        :host { display: flex; flex-direction: column; height: 100vh; box-sizing: border-box; padding: 0 1px 0 3px; position: relative; overflow: hidden; }
        main { flex: 1; display: flex; min-height: 0; }
      </style>
      <daw-toolbar></daw-toolbar>
      <playlist-title></playlist-title>
      <main>
        <clip-picker>
          <picker-item shape="loop" style="--tone: #77606a">Shaker Loop 10</picker-item>
          <picker-item shape="fade">SFX 01</picker-item>
          <picker-item shape="flat">SFX 03</picker-item>
          <picker-item shape="rise">SFX 04</picker-item>
          <picker-item shape="swell">SFX 05</picker-item>
        </clip-picker>
        <playlist-view></playlist-view>
      </main>
      <task-bar></task-bar>
      <screen-marks></screen-marks>`;
  }
}
customElements.define('daw-app', DawApp);
</script>
</body>
</html>
